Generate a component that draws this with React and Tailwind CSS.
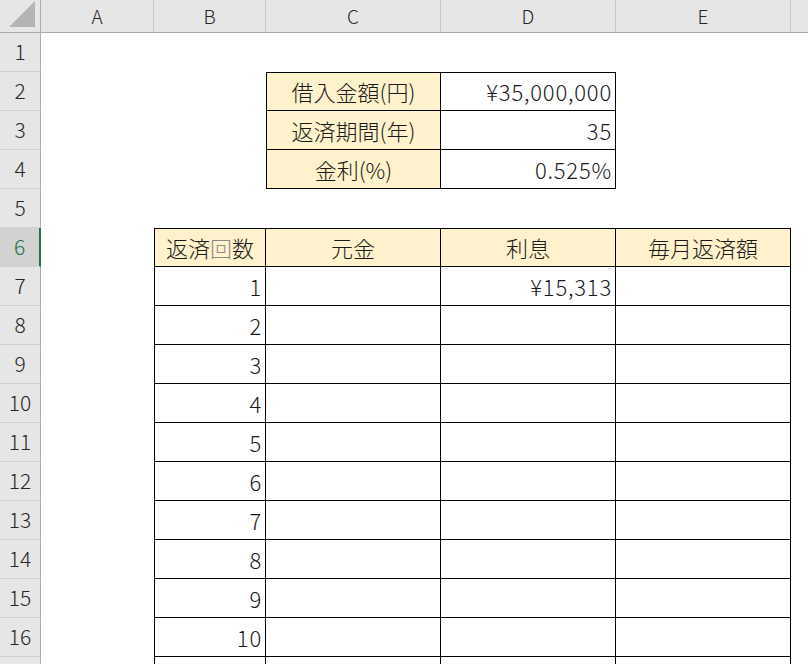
import React from "react";

const COLS = ["A", "B", "C", "D", "E"];
const COLW = ["w-[113px]", "w-[112px]", "w-[175px]", "w-[175px]", "w-[175px]"];
const font = "font-['Noto_Sans_CJK_JP','Noto_Sans',sans-serif]";

function Cell({ w, children, cls = "" }) {
  return (
    <div className={`${w} h-full shrink-0 flex items-center ${cls}`}>{children}</div>
  );
}

function RowHeader({ n, selected }) {
  return (
    <div
      className={`w-[41px] h-full shrink-0 flex items-center justify-center border-b border-[#d0d0d0] text-[21px] font-light ${
        selected
          ? "bg-[#d2d2d2] text-[#217346] border-r-2 border-r-[#217346]"
          : "bg-[#e6e6e6] text-[#262626] border-r border-r-[#ababab]"
      }`}
    >
      {n}
    </div>
  );
}

const hdr = "bg-[#fff2cc] justify-center border-black";
const val = "bg-white justify-end pr-[3px] border-black tracking-[0.8px]";

export default function App() {
  const topRows = [
    ["借入金額(円)", "¥35,000,000"],
    ["返済期間(年)", "35"],
    ["金利(%)", "0.525%"],
  ];
  const bodyRows = [1, 2, 3, 4, 5, 6, 7, 8, 9, 10, 11];

  return (
    <div className={`w-[808px] h-[664px] overflow-hidden bg-white ${font} text-[#1a1a1a]`}>
      {/* column headers */}
      <div className="flex h-[33px] bg-[#e6e6e6] border-b border-[#ababab]">
        <div className="w-[41px] h-full shrink-0 border-r border-[#ababab] relative">
          <svg className="absolute right-[5px] bottom-[5px]" width="26" height="26" viewBox="0 0 26 26">
            <polygon points="26,0 26,26 0,26" fill="#b4b4b4" />
          </svg>
        </div>
        {COLS.map((c, i) => (
          <div
            key={c}
            className={`${COLW[i]} h-full shrink-0 flex items-center justify-center border-r border-[#c6c6c6] text-[19px] font-light text-[#262626]`}
          >
            {c}
          </div>
        ))}
        <div className="flex-1" />
      </div>

      {/* row 1 */}
      <div className="flex h-[39px]">
        <RowHeader n={1} />
      </div>

      {/* rows 2-4 */}
      {topRows.map(([k, v], i) => (
        <div key={k} className="flex h-[39px] text-[22px] font-light">
          <RowHeader n={i + 2} />
          <Cell w="w-[113px]" />
          <Cell w="w-[112px]" />
          <Cell w="w-[175px]" cls={`${hdr} border-l border-r border-b ${i === 0 ? "border-t" : ""}`}>
            {k}
          </Cell>
          <Cell w="w-[175px]" cls={`${val} border-r border-b ${i === 0 ? "border-t" : ""}`}>
            {v}
          </Cell>
        </div>
      ))}

      {/* row 5 */}
      <div className="flex h-[39px]">
        <RowHeader n={5} />
      </div>

      {/* row 6 header */}
      <div className="flex h-[39px] text-[22px] font-light">
        <RowHeader n={6} selected />
        <Cell w="w-[113px]" />
        <Cell w="w-[112px]" cls={`${hdr} border-l border-t border-r border-b`}>
          返済<span className="text-[#8a8a8a]">回</span>数
        </Cell>
        <Cell w="w-[175px]" cls={`${hdr} border-t border-r border-b`}>元金</Cell>
        <Cell w="w-[175px]" cls={`${hdr} border-t border-r border-b`}>利息</Cell>
        <Cell w="w-[175px]" cls={`${hdr} border-t border-r border-b`}>毎月返済額</Cell>
      </div>

      {bodyRows.map((n, i) => (
        <div key={n} className="flex h-[39px] text-[22px] font-light">
          <RowHeader n={n <= 10 ? i + 7 : ""} />
          <Cell w="w-[113px]" />
          <Cell w="w-[112px]" cls={`${val} border-l border-r border-b`}>
            {n <= 10 ? n : ""}
          </Cell>
          <Cell w="w-[175px]" cls={`${val} border-r border-b`} />
          <Cell w="w-[175px]" cls={`${val} border-r border-b`}>
            {n === 1 ? "¥15,313" : ""}
          </Cell>
          <Cell w="w-[175px]" cls={`${val} border-r border-b`} />
        </div>
      ))}
    </div>
  );
}
